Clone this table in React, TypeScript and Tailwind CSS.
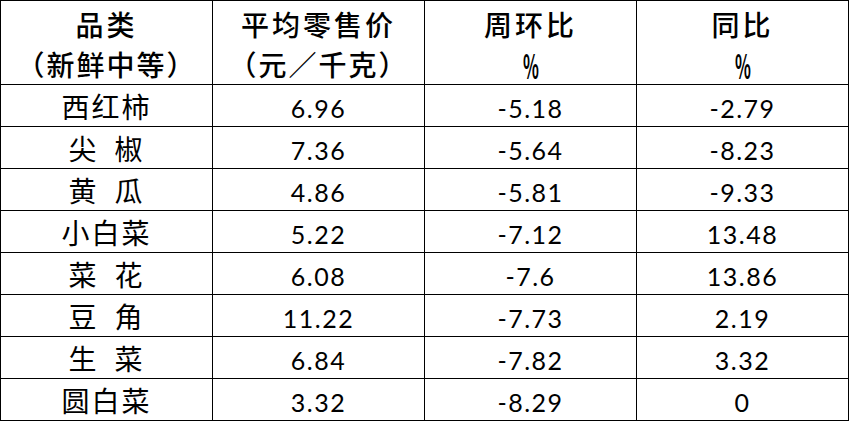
import { Fragment } from "react";

const headers = [
  { top: "品类", bottom: "（新鲜中等）" },
  { top: "平均零售价", bottom: "（元／千克）" },
  { top: "周环比", bottom: "%" },
  { top: "同比", bottom: "%" },
];

// 品名里的空格是半角全宽空位（en space），和原表对齐
const rows = [
  { name: "西红柿", price: "6.96", wow: "-5.18", yoy: "-2.79" },
  { name: "尖\u2002椒", price: "7.36", wow: "-5.64", yoy: "-8.23" },
  { name: "黄\u2002瓜", price: "4.86", wow: "-5.81", yoy: "-9.33" },
  { name: "小白菜", price: "5.22", wow: "-7.12", yoy: "13.48" },
  { name: "菜\u2002花", price: "6.08", wow: "-7.6", yoy: "13.86" },
  { name: "豆\u2002角", price: "11.22", wow: "-7.73", yoy: "2.19" },
  { name: "生\u2002菜", price: "6.84", wow: "-7.82", yoy: "3.32" },
  { name: "圆白菜", price: "3.32", wow: "-8.29", yoy: "0" },
];

const cjk = "font-['Noto_Sans_CJK_SC',sans-serif]";
const num = "font-['Lato','Noto_Sans',sans-serif]";

const App = () => {
  return (
    <div className="h-[421px] w-[849px] overflow-hidden bg-white text-black">
      <div className="grid grid-cols-[212px_212px_212px_212px] grid-rows-[84px_repeat(8,42px)] border-l border-t border-black">
        {headers.map((h, i) => (
          <div
            key={h.top}
            className="flex flex-col items-center justify-center border-b border-r border-black pt-[2px]"
          >
            <span className={`${cjk} text-[28px] font-medium leading-[40px] tracking-[3px]`}>
              {h.top}
            </span>
            {i < 2 ? (
              <span className={`${cjk} text-[28px] font-medium leading-[40px] tracking-[2px]`}>
                {h.bottom}
              </span>
            ) : (
              <span
                className={`${cjk} inline-block scale-x-[0.5] pt-[3px] text-[33px] font-bold leading-[37px]`}
              >
                {h.bottom}
              </span>
            )}
          </div>
        ))}

        {rows.map((r) => (
          <Fragment key={r.name}>
            <div
              className={`${cjk} flex items-center justify-center border-b border-r border-black pt-[1px] text-[28px] leading-none tracking-[2px]`}
            >
              {r.name}
            </div>
            {[r.price, r.wow, r.yoy].map((v, j) => (
              <div
                key={j}
                className={`${num} flex items-center justify-center border-b border-r border-black pt-[5px] text-[25px] leading-none tracking-[1.5px]`}
              >
                {v}
              </div>
            ))}
          </Fragment>
        ))}
      </div>
    </div>
  );
};

export default App;
